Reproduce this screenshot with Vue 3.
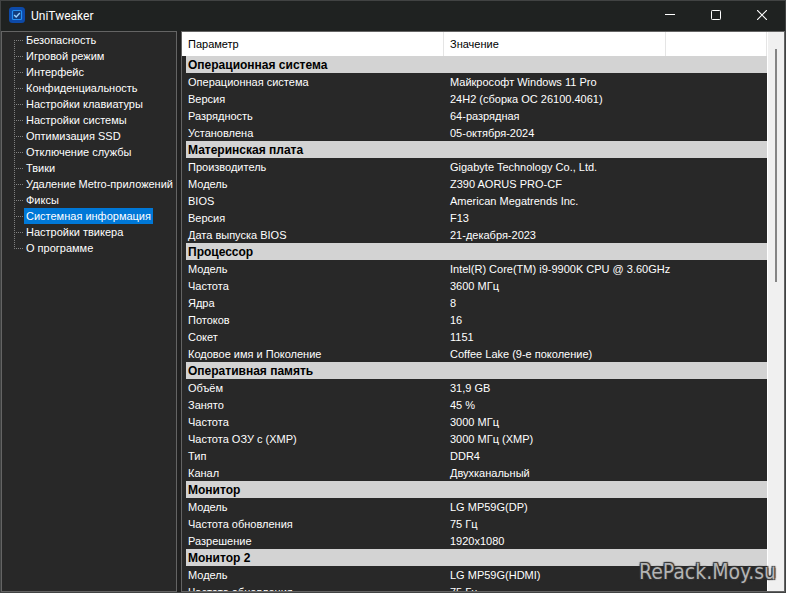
<script setup>
import { ref } from 'vue'

const sections = [
  'Безопасность',
  'Игровой режим',
  'Интерфейс',
  'Конфиденциальность',
  'Настройки клавиатуры',
  'Настройки системы',
  'Оптимизация SSD',
  'Отключение службы',
  'Твики',
  'Удаление Metro-приложений',
  'Фиксы',
  'Системная информация',
  'Настройки твикера',
  'О программе',
]
const active = ref('Системная информация')

const groups = [
  {
    title: 'Операционная система',
    rows: [
      ['Операционная система', 'Майкрософт Windows 11 Pro'],
      ['Версия', '24H2 (сборка ОС 26100.4061)'],
      ['Разрядность', '64-разрядная'],
      ['Установлена', '05-октября-2024'],
    ],
  },
  {
    title: 'Материнская плата',
    rows: [
      ['Производитель', 'Gigabyte Technology Co., Ltd.'],
      ['Модель', 'Z390 AORUS PRO-CF'],
      ['BIOS', 'American Megatrends Inc.'],
      ['Версия', 'F13'],
      ['Дата выпуска BIOS', '21-декабря-2023'],
    ],
  },
  {
    title: 'Процессор',
    rows: [
      ['Модель', 'Intel(R) Core(TM) i9-9900K CPU @ 3.60GHz'],
      ['Частота', '3600 МГц'],
      ['Ядра', '8'],
      ['Потоков', '16'],
      ['Сокет', '1151'],
      ['Кодовое имя и Поколение', 'Coffee Lake (9-е поколение)'],
    ],
  },
  {
    title: 'Оперативная память',
    rows: [
      ['Объём', '31,9 GB'],
      ['Занято', '45 %'],
      ['Частота', '3000 МГц'],
      ['Частота ОЗУ с (XMP)', '3000 МГц (XMP)'],
      ['Тип', 'DDR4'],
      ['Канал', 'Двухканальный'],
    ],
  },
  {
    title: 'Монитор',
    rows: [
      ['Модель', 'LG MP59G(DP)'],
      ['Частота обновления', '75 Гц'],
      ['Разрешение', '1920x1080'],
    ],
  },
  {
    title: 'Монитор 2',
    rows: [
      ['Модель', 'LG MP59G(HDMI)'],
      ['Частота обновления', '75 Гц'],
    ],
  },
]
</script>

<template>
  <div class="window">
    <header class="titlebar">
      <svg class="logo" width="16" height="16" viewBox="0 0 16 16">
        <rect width="16" height="16" rx="3.5" fill="#0d4aa8" />
        <rect x="3.5" y="3.5" width="9" height="9" rx="1" fill="#123c7c" stroke="#2490f2" stroke-width="1.2" />
        <path d="M5.2 7.9l2 2 3.6-3.8" fill="none" stroke="#9ad2ff" stroke-width="1.4" />
      </svg>
      <h1 class="title">UniTweaker</h1>
      <div class="controls">
        <button type="button" aria-label="Свернуть">
          <svg width="10" height="10" viewBox="0 0 10 10"><path d="M0 4.5h10" stroke="#fff" /></svg>
        </button>
        <button type="button" aria-label="Развернуть">
          <svg width="10" height="10" viewBox="0 0 10 10">
            <rect x=".5" y=".5" width="9" height="9" rx=".8" fill="none" stroke="#fff" />
          </svg>
        </button>
        <button type="button" aria-label="Закрыть">
          <svg width="10" height="10" viewBox="0 0 10 10">
            <path d="M0 0l10 10M10 0L0 10" stroke="#fff" stroke-width="1.1" />
          </svg>
        </button>
      </div>
    </header>

    <main class="body">
      <nav class="panel tree">
        <ul>
          <li v-for="s in sections" :key="s">
            <button type="button" :class="{ active: s === active }" @click="active = s">{{ s }}</button>
          </li>
        </ul>
      </nav>

      <section class="panel list">
        <div class="viewport">
          <table>
            <colgroup>
              <col class="c-name" />
              <col class="c-value" />
              <col />
            </colgroup>
            <thead>
              <tr>
                <th scope="col">Параметр</th>
                <th scope="col">Значение</th>
                <th></th>
              </tr>
            </thead>
            <tbody v-for="g in groups" :key="g.title">
              <tr class="group"><th colspan="3" scope="rowgroup">{{ g.title }}</th></tr>
              <tr v-for="r in g.rows" :key="r[0]">
                <td>{{ r[0] }}</td>
                <td>{{ r[1] }}</td>
                <td></td>
              </tr>
            </tbody>
          </table>
        </div>
        <div class="scrollbar"><div class="thumb"></div></div>
      </section>
    </main>
    <div class="watermark">RePack.Moy.su</div>
  </div>
</template>

<style>
body {
  background: #202020;
}
</style>

<style scoped>
.window {
  position: relative;
  box-sizing: border-box;
  height: 100vh;
  display: flex;
  flex-direction: column;
  border: 1px solid #414343;
  background: #202020;
  color: #fff;
  font: 11px/16px "Liberation Sans", Arial, sans-serif;
  overflow: hidden;
}
button {
  margin: 0;
  padding: 0;
  border: 0;
  background: none;
  color: inherit;
  font: inherit;
}
.titlebar {
  flex: none;
  box-sizing: border-box;
  display: flex;
  align-items: center;
  height: 30px;
  padding: 0 0 2px 8px;
  background: #1f2221;
}
.title {
  margin: 2px 0 0 6px;
  font: 400 12px/16px Roboto, "Open Sans", sans-serif;
}
.controls {
  display: flex;
  margin-left: auto;
  height: 100%;
}
.controls button {
  display: flex;
  align-items: center;
  justify-content: center;
  width: 46px;
}
.body {
  flex: 1;
  min-height: 0;
  display: flex;
  gap: 4px;
}
.panel {
  box-sizing: border-box;
  border: 1px solid #646464;
  background: #282828;
  overflow: hidden;
}
.tree {
  flex: none;
  width: 176px;
}
.tree ul {
  margin: 0;
  padding: 0 0 0 12px;
  list-style: none;
}
.tree li {
  display: flex;
  height: 16px;
  background:
    repeating-linear-gradient(180deg, #808080 0 1px, transparent 1px 2px) 0 0 / 1px 100% no-repeat,
    repeating-linear-gradient(90deg, #808080 0 1px, transparent 1px 2px) 0 8px / 9px 1px no-repeat;
}
.tree li:first-child {
  background-size: 1px 8px, 9px 1px;
  background-position: 0 8px, 0 8px;
}
.tree li:last-child {
  background-size: 1px 8px, 9px 1px;
}
.tree button {
  margin-left: 10px;
  padding: 0 2px;
  white-space: nowrap;
}
.tree .active {
  background: #0078d7;
}
.list {
  flex: 1;
  min-width: 0;
  display: flex;
}
.viewport {
  flex: 1;
  min-width: 0;
  overflow: hidden;
}
table {
  width: 100%;
  table-layout: fixed;
  border-collapse: separate;
  border-spacing: 0;
}
.c-name {
  width: 262px;
}
.c-value {
  width: 222px;
}
th,
td {
  box-sizing: border-box;
  padding: 0 0 0 6px;
  text-align: left;
  white-space: nowrap;
}
thead th {
  height: 24px;
  border-right: 1px solid #e5e5e5;
  background: #fff;
  color: #000;
  font-weight: 400;
}
tbody td,
tbody th {
  height: 17px;
  padding-top: 1px;
  line-height: 16px;
}
tbody tr > :first-child {
  border-left: 4px solid #282828;
  padding-left: 2px;
}
.group th {
  background: #d3d3d3;
  color: #000;
  font-weight: 700;
  font-size: 12px;
}
.scrollbar {
  flex: none;
  box-sizing: border-box;
  width: 17px;
  padding: 17px 0 0 7px;
  border-left: 1px solid #fff;
  background: #f0f0f0;
}
.thumb {
  width: 2px;
  height: 43%;
  background: #858585;
}
.watermark {
  position: absolute;
  right: 9px;
  bottom: 8px;
  color: #b4b4b4;
  font: 21px/24px "DejaVu Sans Condensed", "DejaVu Sans", sans-serif;
  text-shadow: 1px 1px 1px #333, -1px -1px 1px #333, 1px -1px 1px #333, -1px 1px 1px #333;
}
</style>
